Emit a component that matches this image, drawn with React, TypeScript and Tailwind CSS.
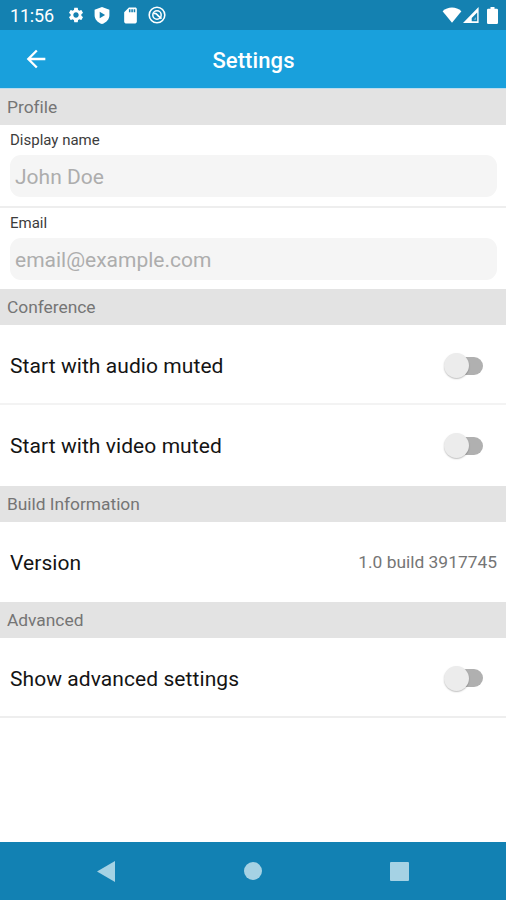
import React, { useState } from 'react';
import { MdArrowBack, MdSdCard, MdSettings } from 'react-icons/md';

interface SectionHeaderProps {
  title: string;
}

const SectionHeader: React.FC<SectionHeaderProps> = ({ title }) => (
  <h2 className="flex h-9 shrink-0 items-center bg-[#e3e3e3] px-[7px] pt-px text-[17.4px] leading-none tracking-[-0.03px] text-[#757575]">
    {title}
  </h2>
);

interface TextFieldProps {
  label: string;
  placeholder: string;
  value: string;
  onChange: (value: string) => void;
}

const TextField: React.FC<TextFieldProps> = ({ label, placeholder, value, onChange }) => (
  <label className="flex h-[81px] shrink-0 flex-col pt-[5px] pr-[9px] pl-2.5">
    <span className="h-[25px] text-[15px] leading-5 text-[#3c3c3c]">{label}</span>
    <input
      type="text"
      value={value}
      onChange={(e) => onChange(e.target.value)}
      placeholder={placeholder}
      className="h-[42px] w-full rounded-[11px] bg-[#f5f5f5] px-[5px] pt-0.5 text-[21px] text-black placeholder:text-[#adadad] focus:outline-none"
    />
  </label>
);

interface ToggleRowProps {
  label: string;
  className: string;
}

const ToggleRow: React.FC<ToggleRowProps> = ({ label, className }) => {
  const [enabled, setEnabled] = useState(false);

  return (
    <div className={`flex shrink-0 items-center justify-between pr-[23px] pl-2.5 ${className}`}>
      <span className="pt-0.5 text-[21px] leading-none tracking-[0.07px] text-[#141414]">{label}</span>
      <button
        role="switch"
        aria-checked={enabled}
        aria-label={label}
        onClick={() => setEnabled(!enabled)}
        className={`flex h-[26px] w-[39px] items-center ${enabled ? 'flex-row-reverse' : ''}`}
      >
        <span className="z-10 size-[25px] shrink-0 rounded-full bg-[#ececec] shadow-[0_1px_1.5px_rgba(0,0,0,0.25)]" />
        <span className={`-ml-3 h-[18px] grow rounded-full ${enabled ? 'bg-[#8ccfed]' : 'bg-[#b0b0b0]'}`} />
      </button>
    </div>
  );
};

const StatusBar = () => (
  <div className="flex h-[30px] shrink-0 items-center justify-between bg-[#1481b1] pr-2 pl-2.5 text-white">
    <div className="flex items-center">
      <span className="w-[57px] pt-0.5 text-[18px] leading-none tracking-[-0.2px]">11:56</span>
      <MdSettings className="mr-[9px] size-[18px]" />
      <svg className="mr-[11px] h-[17px] w-4" viewBox="0 0 16 17" fill="currentColor">
        <path fillRule="evenodd" d="M8 0l7.4 2.8v5.4c0 4-3 7.3-7.4 8.8C3.6 15.5.6 12.2.6 8.2V2.8zM5.7 4.8v6.4l5.400-3.200z" />
      </svg>
      <MdSdCard className="mr-2 size-[19px]" />
      <svg className="size-[18px]" viewBox="0 0 18 18" fill="none" stroke="currentColor">
        <circle cx="9" cy="9" r="7.8" strokeWidth="1.6" />
        <circle cx="9" cy="9" r="4.2" strokeWidth="1.5" />
        <path d="M5.500 7.500c2.500-.8 3 .2 4 1.500s2 1.800 4 3.700" strokeWidth="1.8" />
      </svg>
    </div>
    <div className="flex items-center">
      <svg className="h-4 w-5" viewBox="0 0 20 16" fill="currentColor">
        <path d="M.6 4.200C5.800-.8 14.200-.8 19.400 4.200L10 15.800z" />
      </svg>
      <svg className="mr-2 ml-px h-4 w-4" viewBox="0 0 16 16" fill="currentColor">
        <path fillRule="evenodd" d="M15.600 0v16H0zM14.200 5.500 8.700 11v3.300h5.500z" />
        <path d="M10.500 12.800 13 10v2.800z" opacity="0.400" />
      </svg>
      <svg className="h-[17px] w-[11px]" viewBox="0 0 11 17" fill="currentColor">
        <path d="M3.500 0h4v1.700H9.800q1.200 0 1.200 1.200v12.900q0 1.200-1.200 1.200H1.200Q0 17 0 15.800V2.900q0-1.200 1.200-1.200h2.300z" />
      </svg>
    </div>
  </div>
);

const NavigationBar = () => (
  <div className="flex h-[58px] shrink-0 items-center justify-between bg-[#1281b3] px-[97px] text-[#a5d2e4]">
    <svg className="h-[21px] w-[18px]" viewBox="0 0 18 21" fill="currentColor">
      <path d="M18 0v21L0 10.500z" />
    </svg>
    <div className="size-[18px] rounded-full bg-[#a5d2e4]" />
    <div className="size-[19px] rounded-[1px] bg-[#a5d2e4]" />
  </div>
);

export default function App() {
  const [displayName, setDisplayName] = useState('');
  const [email, setEmail] = useState('');

  return (
    <div className="flex h-[900px] w-[506px] flex-col overflow-hidden bg-white font-['Roboto',sans-serif]">
      <StatusBar />

      {/* Title bar */}
      <header className="grid h-[59px] shrink-0 grid-cols-[1fr_auto_1fr] items-center border-b border-[#b9dcee] bg-[#19a0dc] text-white">
        <button aria-label="Back" className="ml-[22px] size-7">
          <MdArrowBack className="size-7" />
        </button>
        <h1 className="pt-1 pl-px text-[22px] leading-none font-medium tracking-[0.1px]">Settings</h1>
      </header>

      <main className="flex grow flex-col">
        <SectionHeader title="Profile" />
        <TextField label="Display name" placeholder="John Doe" value={displayName} onChange={setDisplayName} />
        <div className="h-0.5 shrink-0 bg-[#eeeeee]" />
        <TextField label="Email" placeholder="email@example.com" value={email} onChange={setEmail} />

        <SectionHeader title="Conference" />
        <ToggleRow label="Start with audio muted" className="h-[78px] pt-[3px]" />
        <div className="h-0.5 shrink-0 bg-[#f3f3f3]" />
        <ToggleRow label="Start with video muted" className="h-[81px]" />

        <SectionHeader title="Build Information" />
        <div className="flex h-20 shrink-0 items-center justify-between pr-[9px] pl-2.5 leading-none">
          <span className="pt-0.5 text-[21px] tracking-[0.07px] text-[#141414]">Version</span>
          <span className="pt-px text-[17.4px] text-[#757575]">1.0 build 3917745</span>
        </div>

        <SectionHeader title="Advanced" />
        <ToggleRow label="Show advanced settings" className="h-[78px] pt-0.5" />
        <div className="h-0.5 shrink-0 bg-[#eeeeee]" />
      </main>

      <NavigationBar />
    </div>
  );
}
